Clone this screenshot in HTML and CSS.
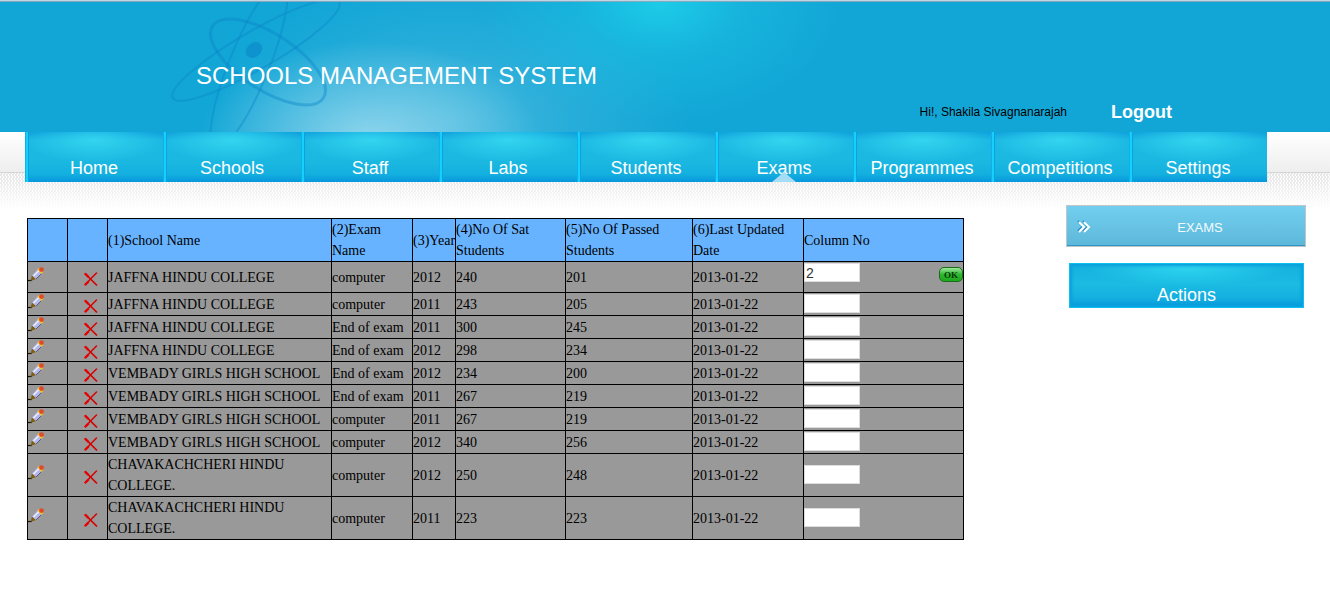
FILE: index.html
```
<!DOCTYPE html>
<html lang="en">
	<head>
		<meta charset="utf-8">
		<title>Schools Management System</title>
		<link rel="stylesheet" href="styles.css">
	</head>
	<body>
		<svg class="defs">
			<symbol id="pencil" viewBox="0 0 16 16">
				<path d="M0 13.500H4" stroke="#111" stroke-width="1.200"/>
				<path d="M2.500 14L4 8.500L8 12Z" fill="#7d5f0c"/>
				<path d="M4 8.500L10 2L14 6L8 12Z" fill="#b4b8ea"/>
				<path d="M5.500 9L11 3.500" stroke="#eceeff" stroke-width="1.500"/>
				<path d="M8 12L14 6" stroke="#555a85"/>
				<path d="M9.500 2.500L11 1L15.500 5L13.500 7Z" fill="#f5c21b"/>
				<circle cx="13.500" cy="2.600" r="2.400" fill="#e04a2a"/>
			</symbol>
			<symbol id="cross" viewBox="0 0 14 14">
				<path d="M1.500 2L12.500 13" stroke="#d80000" stroke-width="1.700" stroke-linecap="round"/>
				<path d="M12.500 1L7 6.500L1.500 12.500" stroke="#d80000" stroke-width="1.500" stroke-linecap="round" fill="none"/>
				<path d="M1.500 2L4 4.500M4 10L1.500 12.500" stroke="#e80000" stroke-width="2.400" stroke-linecap="round"/>
			</symbol>
		</svg>
		<header>
			<svg class="atom" viewBox="0 0 180 130">
				<g fill="none" stroke="#0c86c8" stroke-opacity=".42">
					<ellipse cx="98" cy="60" rx="66" ry="28" transform="rotate(33 98 60)" stroke-width="3"/>
					<ellipse cx="86" cy="48" rx="96" ry="19" transform="rotate(-30 86 48)" stroke-width="2"/>
					<ellipse cx="79" cy="63" rx="90" ry="20" transform="rotate(-68 79 63)" stroke-width="2"/>
				</g>
				<ellipse cx="84" cy="48" rx="9" ry="7" transform="rotate(-40 84 48)" fill="#0c86c8" fill-opacity=".6"/>
			</svg>
			<h1>SCHOOLS MANAGEMENT SYSTEM</h1>
			<div class="user">
				<span>Hi!, Shakila Sivagnanarajah</span>
				<a href="#" class="logout">Logout</a>
			</div>
		</header>
		<nav>
			<ul class="menu">
				<li><a href="#">Home</a></li>
				<li><a href="#">Schools</a></li>
				<li><a href="#">Staff</a></li>
				<li><a href="#">Labs</a></li>
				<li><a href="#">Students</a></li>
				<li><a href="#" class="current">Exams</a></li>
				<li><a href="#">Programmes</a></li>
				<li><a href="#">Competitions</a></li>
				<li><a href="#">Settings</a></li>
			</ul>
		</nav>
		<div class="content">
			<main>
				<table>
					<colgroup>
						<col class="icon"><col class="icon"><col class="school"><col class="exam"><col class="year">
						<col class="sat"><col class="passed"><col class="updated"><col class="colno">
					</colgroup>
					<thead>
						<tr>
							<th></th>
							<th></th>
							<th>(1)School Name</th>
							<th>(2)Exam Name</th>
							<th>(3)Year</th>
							<th>(4)No Of Sat Students</th>
							<th>(5)No Of Passed Students</th>
							<th>(6)Last Updated Date</th>
							<th>Column No</th>
						</tr>
					</thead>
					<tbody id="results"></tbody>
				</table>
			</main>
			<aside>
				<a href="#" class="section">
					<svg class="arrows" viewBox="0 0 14 13">
						<path d="M1 1L6 6L1 11M6 1L11 6L6 11" fill="none" stroke="#2f8fc4" stroke-width="2"/>
						<path d="M2 2L7 7L2 12M7 2L12 7L7 12" fill="none" stroke="#fff" stroke-width="2"/>
					</svg>
					<span>EXAMS</span>
				</a>
				<button type="button" class="actions">Actions</button>
			</aside>
		</div>
		<script src="exams.js"></script>
	</body>
</html>
```
FILE: exams.js
```
var exams = [
	["JAFFNA HINDU COLLEGE", "computer", 2012, 240, 201],
	["JAFFNA HINDU COLLEGE", "computer", 2011, 243, 205],
	["JAFFNA HINDU COLLEGE", "End of exam", 2011, 300, 245],
	["JAFFNA HINDU COLLEGE", "End of exam", 2012, 298, 234],
	["VEMBADY GIRLS HIGH SCHOOL", "End of exam", 2012, 234, 200],
	["VEMBADY GIRLS HIGH SCHOOL", "End of exam", 2011, 267, 219],
	["VEMBADY GIRLS HIGH SCHOOL", "computer", 2011, 267, 219],
	["VEMBADY GIRLS HIGH SCHOOL", "computer", 2012, 340, 256],
	["CHAVAKACHCHERI HINDU COLLEGE.", "computer", 2012, 250, 248],
	["CHAVAKACHCHERI HINDU COLLEGE.", "computer", 2011, 223, 223]
];

function icon(name, label){
	return '<a href="#" class="' + name + '" aria-label="' + label + '"><svg><use href="#' + name + '"/></svg></a>';
}

function showExams(){
	var html = "";
	for(var i = 0; i < exams.length; i++){
		var first = i == 0;
		html += first ? '<tr class="first">' : "<tr>";
		html += "<td>" + icon("pencil", "Edit") + "</td>";
		html += "<td>" + icon("cross", "Delete") + "</td>";
		for(var j = 0; j < exams[i].length; j++){
			html += "<td>" + exams[i][j] + "</td>";
		}
		html += "<td>2013-01-22</td>";
		html += '<td><div class="entry"><input type="text" aria-label="Column No" value="' + (first ? 2 : "") + '">';
		html += (first ? '<button type="button" class="ok">OK</button>' : "") + "</div></td></tr>";
	}
	document.getElementById("results").innerHTML = html;
}

showExams();
```
FILE: styles.css
```
body{
	margin: 0;
	background: #fff;
	font-family: "Liberation Sans", Arial, sans-serif;
}
.defs{
	display: none;
}
header{
	position: relative;
	box-sizing: border-box;
	height: 132px;
	padding: 61px 158px 0 196px;
	overflow: hidden;
	border-top: 1px solid #c4d4e2;
	box-shadow: inset 0 1px #7fa9bd;
	background:
		radial-gradient(180px 120px at 660px 0, rgba(30, 208, 234, .9), rgba(30, 200, 230, .4) 45%, rgba(30, 190, 225, 0)),
		radial-gradient(170px 100px at 370px 140px, rgba(160, 220, 240, .85), rgba(150, 216, 238, .5) 45%, rgba(100, 195, 225, 0)),
		radial-gradient(240px 140px at 450px 120px, rgba(110, 200, 228, .55), rgba(90, 190, 225, .3) 50%, rgba(90, 190, 225, 0)),
		#12a6d6;
}
.atom{
	position: absolute;
	left: 170px;
	top: 1px;
	width: 180px;
	height: 130px;
}
h1{
	position: relative;
	margin: 0;
	color: #fff;
	font-size: 24px;
	font-weight: normal;
	line-height: 28px;
}
.user{
	display: flex;
	justify-content: flex-end;
	align-items: center;
	gap: 44px;
	margin-top: 12px;
	font-size: 12px;
	line-height: 20px;
}
.logout{
	color: #fff;
	font-size: 18px;
	font-weight: bold;
	text-decoration: none;
}
nav{
	height: 78px;
	padding: 0 63px 0 25px;
	background:
		linear-gradient(#fff, #eee) 0 0 / 100% 40px no-repeat,
		linear-gradient(#d5d5d5, #d5d5d5) 0 40px / 100% 1px no-repeat,
		linear-gradient(rgba(255, 255, 255, 0) 41px, #fff),
		conic-gradient(#e6e6e6 25%, #fff 0 50%, #e6e6e6 0 75%, #fff 0) 0 0 / 3px 4px;
}
.menu{
	display: flex;
	margin: 0;
	padding: 0;
	list-style: none;
}
.menu li{
	flex: 1;
}
.menu a{
	position: relative;
	display: block;
	box-sizing: border-box;
	height: 50px;
	padding-top: 26px;
	color: #fff;
	font-size: 18px;
	line-height: 20px;
	text-align: center;
	text-decoration: none;
	background:
		linear-gradient(90deg, #0cb0ea 1px, #14d0fa 1px 3px, #0aa3e0 3px) 0 0 / 4px 100% no-repeat,
		radial-gradient(70px 22px at 50% 8px, rgba(60, 225, 245, .7), rgba(40, 215, 240, 0)),
		linear-gradient(#0fa0dc, #1cb8e2 8px, #1bb9e1 28px, #14b0e0 42px, #0798dc);
}
.menu .current::after{
	content: "";
	position: absolute;
	left: 57px;
	bottom: 0;
	border: 12px solid transparent;
	border-top: 0;
	border-bottom: 10px solid #a5def4;
}
.content{
	display: flex;
	justify-content: space-between;
	align-items: flex-start;
	padding: 0 24px 0 27px;
}
main{
	flex: 0 1 937px;
	padding-top: 8px;
}
table{
	width: 100%;
	table-layout: fixed;
	border-collapse: collapse;
	background: #999;
	color: #000;
	font: 14px/21px "Liberation Serif", "Times New Roman", serif;
}
.icon{
	width: 40px;
}
.school{
	width: 224px;
}
.exam{
	width: 81px;
}
.year{
	width: 43px;
}
.sat{
	width: 110px;
}
.passed{
	width: 127px;
}
.updated{
	width: 111px;
}
th, td{
	height: 22px;
	padding: 0;
	border: 1px solid #000;
	text-align: left;
	font-weight: normal;
}
th{
	background: #68b3ff;
}
.first td{
	height: 30px;
}
.pencil, .cross{
	display: block;
	height: 16px;
}
.pencil{
	margin-bottom: 5px;
}
.pencil svg{
	display: block;
	width: 16px;
	height: 16px;
}
.cross{
	margin: 5px 0 0 16px;
}
.cross svg{
	display: block;
	width: 14px;
	height: 14px;
}
.entry{
	display: flex;
	justify-content: space-between;
	align-items: flex-start;
	margin-bottom: 2px;
}
.entry input{
	box-sizing: border-box;
	width: 56px;
	height: 19px;
	padding: 0 1px;
	border: 1px solid #ddd;
	background: #fff;
	color: #333;
	font: 14px "Liberation Sans", Arial, sans-serif;
}
.first .entry{
	margin-bottom: 9px;
}
.ok{
	width: 24px;
	height: 15px;
	margin-top: 4px;
	padding: 0;
	border: 1px solid #1c6b1c;
	border-radius: 5px;
	background: linear-gradient(#9be89b, #2fb52f 50%, #1da81d);
	color: #033803;
	font: bold 9px/12px "Liberation Serif", serif;
}
aside{
	width: 240px;
	margin-top: -5px;
}
.section{
	position: relative;
	display: block;
	box-sizing: border-box;
	height: 42px;
	padding-left: 28px;
	border: 1px solid #bfc6ca;
	box-shadow: inset 0 -1px #2f96c4;
	background: linear-gradient(#72cfef, #5db7da);
	color: #f2fafd;
	font-size: 13px;
	line-height: 44px;
	text-align: center;
	text-decoration: none;
}
.arrows{
	position: absolute;
	left: 10px;
	top: 14px;
	width: 14px;
	height: 13px;
}
.actions{
	display: block;
	width: 235px;
	height: 45px;
	margin: 16px 0 0 3px;
	padding: 18px 0 0;
	border: 1px solid #0cc0f4;
	box-shadow: inset 0 0 0 1px #0aa3dc, inset 0 0 3px 2px #0b9fdc;
	background:
		radial-gradient(100px 18px at 50% 4px, rgba(50, 220, 242, .8), rgba(40, 215, 240, 0)),
		linear-gradient(#15b0de, #1bbbe2 20px, #14b0e0 34px, #0798dc);
	color: #fff;
	font: 18px/20px "Liberation Sans", Arial, sans-serif;
}
```
